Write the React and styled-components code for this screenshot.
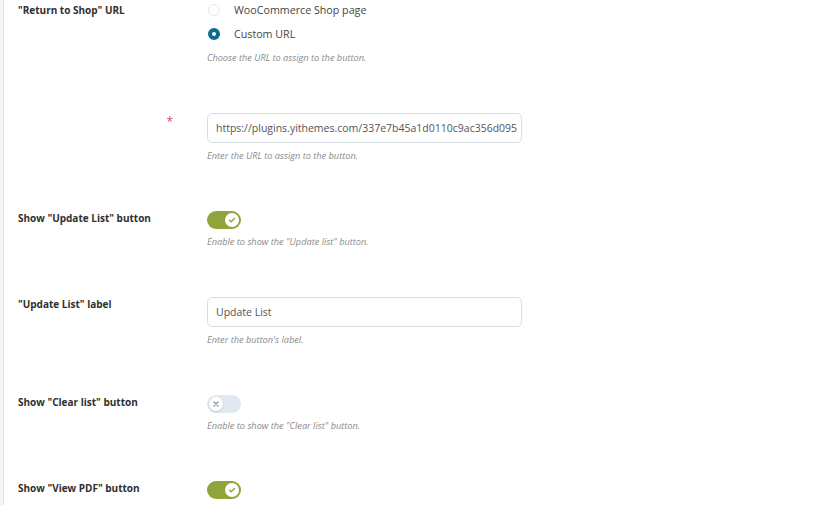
import styled, { createGlobalStyle } from "styled-components";

const GlobalStyle = createGlobalStyle`
  html, body {
    margin: 0;
    padding: 0;
    background: #f5f5f5;
  }
  body {
    font-family: "Open Sans", "Liberation Sans", sans-serif;
    color: #333;
  }
`;

const Page = styled.div`
  margin-left: 3px;
  min-height: 505px;
  background: #fff;
  border-left: 1px solid #e4e6e8;
  padding-left: 14px;
  overflow: hidden;
`;

const Row = styled.div`
  display: flex;
  padding: 25px 0;

  &:first-child {
    padding-top: 3px;
  }
`;

const LabelCell = styled.div`
  width: 157px;
  flex-shrink: 0;
  margin-right: 32px;
  display: flex;
  justify-content: space-between;
  align-items: flex-start;
`;

const Label = styled.span`
  font-size: 10px;
  font-weight: 700;
  line-height: 14px;
  color: #2f2f2f;
`;

const Required = styled.span`
  color: #e2475f;
  font-size: 12px;
  line-height: 10px;
  margin-top: 4px;
  margin-right: 2px;
`;

const Field = styled.div`
  display: flex;
  flex-direction: column;
  align-items: flex-start;
`;

const RadioGroup = styled.div`
  display: flex;
  flex-direction: column;
  gap: 10px;
  margin-bottom: 4px;
`;

const RadioItem = styled.label`
  display: flex;
  align-items: center;
  height: 14px;
  font-size: 10.7px;
  color: #454545;
`;

const RadioDot = styled.span`
  box-sizing: border-box;
  width: 12px;
  height: 12px;
  border-radius: 50%;
  margin-left: 1px;
  margin-right: 14px;
  background: #fff;
  border: ${(p) => (p.$checked ? "4px solid #0f6c8e" : "1px solid #e3e7ec")};
`;

const Input = styled.div`
  box-sizing: border-box;
  width: 315px;
  height: 30px;
  padding: 0 0 0 8px;
  border: 1px solid #d9dee5;
  border-radius: 5px;
  background: #fff;
  display: flex;
  align-items: center;
  font-size: 10.5px;
  color: #555;
  white-space: nowrap;
  overflow: hidden;
`;

const Desc = styled.p`
  margin: 7px 0 0;
  font-size: 9.2px;
  line-height: 11px;
  font-style: italic;
  color: #8a8a8a;
`;

const Track = styled.span`
  box-sizing: border-box;
  width: 34px;
  height: 18px;
  border-radius: 9px;
  padding: 2px;
  display: flex;
  justify-content: ${(p) => (p.$on ? "flex-end" : "flex-start")};
  background: ${(p) => (p.$on ? "#8fa53b" : "#e2e8ef")};
`;

const Knob = styled.span`
  width: 14px;
  height: 14px;
  border-radius: 50%;
  background: #fff;
  display: flex;
  align-items: center;
  justify-content: center;
  box-shadow: ${(p) => (p.$on ? "none" : "0 1px 2px rgba(0,0,0,0.15)")};
`;

function Toggle({ on }) {
  return (
    <Track $on={on}>
      <Knob $on={on}>
        {on ? (
          <svg width="8" height="8" viewBox="0 0 8 8">
            <path d="M1.5 4.2 L3.2 5.8 L6.5 2.4" fill="none" stroke="#8fa53b" strokeWidth="1.4" strokeLinecap="round" strokeLinejoin="round" />
          </svg>
        ) : (
          <svg width="6" height="6" viewBox="0 0 6 6">
            <path d="M1 1 L5 5 M5 1 L1 5" stroke="#8a8f96" strokeWidth="1.2" strokeLinecap="round" />
          </svg>
        )}
      </Knob>
    </Track>
  );
}

export default function App() {
  return (
    <>
      <GlobalStyle />
      <Page>
        <Row>
          <LabelCell>
            <Label>"Return to Shop" URL</Label>
          </LabelCell>
          <Field>
            <RadioGroup>
              <RadioItem>
                <RadioDot />
                WooCommerce Shop page
              </RadioItem>
              <RadioItem>
                <RadioDot $checked />
                Custom URL
              </RadioItem>
            </RadioGroup>
            <Desc>Choose the URL to assign to the button.</Desc>
          </Field>
        </Row>

        <Row>
          <LabelCell>
            <Label />
            <Required>*</Required>
          </LabelCell>
          <Field>
            <Input>https://plugins.yithemes.com/337e7b45a1d0110c9ac356d095</Input>
            <Desc>Enter the URL to assign to the button.</Desc>
          </Field>
        </Row>

        <Row>
          <LabelCell>
            <Label>Show "Update List" button</Label>
          </LabelCell>
          <Field>
            <Toggle on />
            <Desc>Enable to show the "Update list" button.</Desc>
          </Field>
        </Row>

        <Row>
          <LabelCell>
            <Label>"Update List" label</Label>
          </LabelCell>
          <Field>
            <Input>Update List</Input>
            <Desc>Enter the button's label.</Desc>
          </Field>
        </Row>

        <Row>
          <LabelCell>
            <Label>Show "Clear list" button</Label>
          </LabelCell>
          <Field>
            <Toggle on={false} />
            <Desc>Enable to show the "Clear list" button.</Desc>
          </Field>
        </Row>

        <Row>
          <LabelCell>
            <Label>Show "View PDF" button</Label>
          </LabelCell>
          <Field>
            <Toggle on />
          </Field>
        </Row>
      </Page>
    </>
  );
}
